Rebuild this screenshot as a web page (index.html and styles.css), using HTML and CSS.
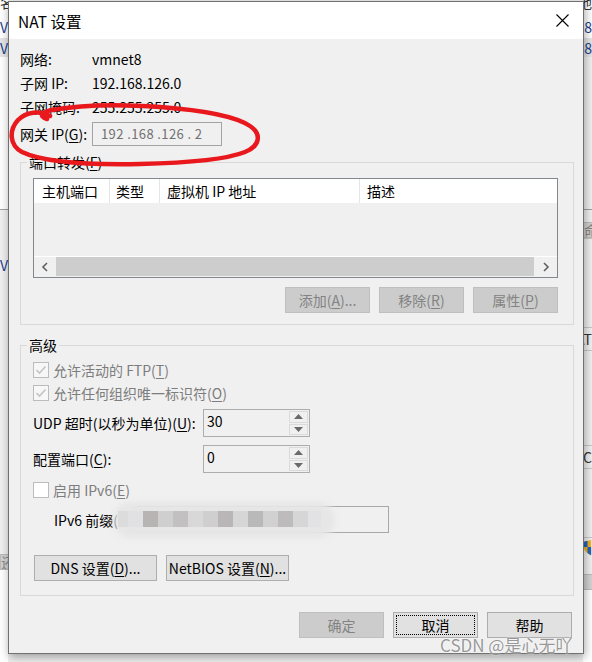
FILE: index.html
```html
<!DOCTYPE html>
<html lang="zh-CN">
<head>
    <meta charset="UTF-8">
    <title>NAT 设置</title>
    <link rel="stylesheet" href="styles.css">
</head>
<body>
    <!-- the windows behind the dialog -->
    <div class="desk">
        <div class="strip">
            <div class="band white h16"><span class="cut">名</span></div>
            <div class="band white h22 blue">V</div>
            <div class="band grey h19 blue">V</div>
            <div class="band white h152"></div>
            <div class="band line"></div>
            <div class="band h44"></div>
            <div class="band h22 blue">V</div>
            <div class="band h278"></div>
            <div class="band box h26">还</div>
            <div class="band white"></div>
        </div>
        <div class="strip right">
            <div class="band white h16"><span class="cut">地</span></div>
            <div class="band white h22 blue">68</div>
            <div class="band grey h19 blue">68</div>
            <div class="band h152"></div>
            <div class="band line"></div>
            <div class="band h12"></div>
            <div class="band box h24">命</div>
            <div class="band h90 lined"></div>
            <div class="band h22">AT</div>
            <div class="band h96 lined"></div>
            <div class="band h22">IC</div>
            <div class="band h70 lined"></div>
            <div class="band h20">
                <svg width="10" height="18" viewBox="0 0 10 18">
                    <path d="M1 2 L9 0 L9 17 C4 15 1 12 1 8 Z" fill="#f2b01e"/>
                    <path d="M1 2 L5 1 L5 8 L1 8 Z M5 8 L9 8 L9 17 C7 16 5 15 5 14 Z" fill="#1f64c2"/>
                </svg>
            </div>
            <div class="band h16"></div>
            <div class="band box h26"></div>
            <div class="band white"></div>
        </div>
    </div>

    <div class="dialog">
        <div class="titlebar">
            <span class="title">NAT 设置</span>
            <svg class="close" width="13" height="13" viewBox="0 0 13 13">
                <path d="M0.5 0.5 L12.5 12.5 M12.5 0.5 L0.5 12.5" stroke="#000" stroke-width="1.1"/>
            </svg>
        </div>

        <div class="content">
            <div class="info">
                <div class="row"><span class="lbl">网络:</span><span>vmnet8</span></div>
                <div class="row"><span class="lbl">子网 IP:</span><span>192.168.126.0</span></div>
                <div class="row"><span class="lbl">子网掩码:</span><span>255.255.255.0</span></div>
                <div class="row gw">
                    <span class="lbl">网关 IP(<u>G</u>):</span>
                    <div class="ipbox">192 .168 .126 . 2</div>
                </div>
            </div>

            <fieldset class="group pf">
                <legend>端口转发(<u>F</u>)</legend>
                <div class="list">
                    <div class="lhead">
                        <span class="c1">主机端口</span>
                        <span class="c2">类型</span>
                        <span class="c3">虚拟机 IP 地址</span>
                        <span class="c4">描述</span>
                    </div>
                    <div class="lbody"></div>
                    <div class="hscroll">
                        <div class="sbtn">
                            <svg width="8" height="10" viewBox="0 0 8 10"><path d="M6 1 L2 5 L6 9" fill="none" stroke="#606060" stroke-width="1.6"/></svg>
                        </div>
                        <div class="thumb"></div>
                        <div class="sbtn r">
                            <svg width="8" height="10" viewBox="0 0 8 10"><path d="M2 1 L6 5 L2 9" fill="none" stroke="#606060" stroke-width="1.6"/></svg>
                        </div>
                    </div>
                </div>
                <div class="btnrow">
                    <button class="btn off">添加(<u>A</u>)...</button>
                    <button class="btn off">移除(<u>R</u>)</button>
                    <button class="btn off">属性(<u>P</u>)</button>
                </div>
            </fieldset>

            <fieldset class="group adv">
                <legend>高级</legend>
                <div class="cb off">
                    <span class="box"><svg width="14" height="14" viewBox="0 0 14 14"><path d="M2.5 7 L5.5 10 L11.5 3.5" fill="none" stroke="#c4c4c4" stroke-width="1.6"/></svg></span>
                    <span>允许活动的 FTP(<u>T</u>)</span>
                </div>
                <div class="cb off">
                    <span class="box"><svg width="14" height="14" viewBox="0 0 14 14"><path d="M2.5 7 L5.5 10 L11.5 3.5" fill="none" stroke="#c4c4c4" stroke-width="1.6"/></svg></span>
                    <span>允许任何组织唯一标识符(<u>O</u>)</span>
                </div>
                <div class="field udp">
                    <span class="flbl">UDP 超时(以秒为单位)(<u>U</u>):</span>
                    <div class="spin">
                        <span class="val">30</span>
                        <div class="arrows">
                            <span class="arr"><svg width="9" height="5" viewBox="0 0 9 5"><path d="M4.5 0 L9 5 L0 5 Z" fill="#6a6a6a"/></svg></span>
                            <span class="arr"><svg width="9" height="5" viewBox="0 0 9 5"><path d="M0 0 L9 0 L4.5 5 Z" fill="#6a6a6a"/></svg></span>
                        </div>
                    </div>
                </div>
                <div class="field port">
                    <span class="flbl">配置端口(<u>C</u>):</span>
                    <div class="spin">
                        <span class="val">0</span>
                        <div class="arrows">
                            <span class="arr"><svg width="9" height="5" viewBox="0 0 9 5"><path d="M4.5 0 L9 5 L0 5 Z" fill="#6a6a6a"/></svg></span>
                            <span class="arr"><svg width="9" height="5" viewBox="0 0 9 5"><path d="M0 0 L9 0 L4.5 5 Z" fill="#6a6a6a"/></svg></span>
                        </div>
                    </div>
                </div>
                <div class="cb off v6">
                    <span class="box blank"></span>
                    <span>启用 IPv6(<u>E</u>)</span>
                </div>
                <div class="ipv6">
                    <span class="v6lbl">IPv6 前缀(</span>
                    <div class="v6box"></div>
                    <!-- blurred out by the screenshot author -->
                    <div class="halo"></div>
                    <div class="mosaic">
                        <i style="width:10px;background:#dcdcdc"></i>
                        <i style="background:#e1e1e3"></i>
                        <i style="background:#b8b4b4"></i>
                        <i style="background:#cfcfcf"></i>
                        <i style="background:#c2c0c0"></i>
                        <i style="background:#d8d8d8"></i>
                        <i style="background:#cfcfcf"></i>
                        <i style="background:#b9b6b7"></i>
                        <i style="background:#d6d6d6"></i>
                        <i style="background:#b9b9b9"></i>
                        <i style="background:#d1d1d1"></i>
                        <i style="background:#bdbbbb"></i>
                        <i style="background:#d6d6d6"></i>
                        <i style="width:13px;background:#e2e2e5"></i>
                    </div>
                </div>
                <div class="btnrow left">
                    <button class="btn wide">DNS 设置(<u>D</u>)...</button>
                    <button class="btn wide">NetBIOS 设置(<u>N</u>)...</button>
                </div>
            </fieldset>

            <div class="footer">
                <button class="btn off">确定</button>
                <button class="btn focus">取消</button>
                <button class="btn">帮助</button>
            </div>
        </div>
    </div>

    <svg class="scribble" width="592" height="662" viewBox="0 0 592 662">
        <path d="M50 116 C40 110 26 112 18 120 C9 130 9 145 22 152 C45 163 90 165 140 164 C185 163 225 160 245 152 C260 146 262 134 250 126 C235 116 200 110 160 107 C120 104 80 105 52 110 C42 112 38 116 47 119"
              fill="none" stroke="#e8181c" stroke-width="4.5" stroke-linecap="round" stroke-linejoin="round"/>
    </svg>

    <div class="mark">CSDN @是心无吖</div>
</body>
</html>
```

FILE: styles.css
```css
* {
    box-sizing: border-box;
}
body {
    margin: 0;
    width: 592px;
    height: 662px;
    overflow: hidden;
    position: relative;
    background: #f0f0f0;
    font-family: "Noto Sans CJK SC", "Noto Sans", sans-serif;
    font-size: 14px;
    color: #000;
}
u {
    text-decoration-thickness: 1px;
    text-underline-offset: 2px;
}

/* background windows */
.desk {
    display: flex;
    justify-content: space-between;
    height: 662px;
}
.strip {
    width: 8px;
    display: flex;
    flex-direction: column;
    overflow: hidden;
    font-size: 14px;
    line-height: 20px;
    color: #333;
    white-space: nowrap;
}
.strip.right {
    width: 9px;
    align-items: stretch;
}
.band {
    flex: none;
    display: flex;
    align-items: center;
    background: #f0f0f0;
    overflow: hidden;
}
.strip.right .band {
    justify-content: flex-end;
}
.band.white { background: #fff; flex: 1; }
.band.grey { background: #e5e5e5; }
.band.box { background: #d3d3d3; color: #888; }
.band.line { height: 1px; background: #a0a0a0; }
.band.lined { border-top: 1px solid #c8c8c8; border-bottom: 1px solid #c8c8c8; }
.band.blue { color: #1c3f8f; }
.cut { margin-top: -12px; }
.h12 { height: 12px; }
.h16 { height: 16px; flex: none !important; }
.h19 { height: 19px; }
.h20 { height: 20px; }
.h22 { height: 22px; flex: none !important; }
.h24 { height: 24px; }
.h26 { height: 26px; }
.h44 { height: 44px; }
.h70 { height: 70px; }
.h90 { height: 90px; }
.h96 { height: 96px; }
.h152 { height: 152px; flex: none !important; }
.h278 { height: 278px; }

/* dialog */
.dialog {
    position: absolute;
    left: 8px;
    top: 1px;
    width: 576px;
    height: 653px;
    border: 1px solid #707070;
    background: #f0f0f0;
    box-shadow: 1px 3px 9px rgba(0, 0, 0, 0.35);
}
.titlebar {
    height: 37px;
    background: #fff;
    display: flex;
    align-items: center;
    justify-content: space-between;
    padding: 0 14px 0 9px;
}
.title {
    font-size: 15.5px;
}
.content {
    padding: 8px 9px 0 11px;
}
.row {
    display: flex;
    align-items: center;
    height: 24px;
}
.lbl {
    width: 72px;
    flex: none;
}
.row.gw {
    margin-top: 3px;
    height: 24px;
}
.ipbox {
    width: 130px;
    height: 24px;
    border: 1px solid #a3a3a3;
    color: #707070;
    font-size: 13px;
    line-height: 22px;
    padding-left: 8px;
    letter-spacing: 0.4px;
}

/* group boxes */
.group {
    margin: 7px 0 0;
    border: 1px solid #d9d9d9;
    padding: 7px 15px 11px 12px;
    min-width: 0;
}
.group legend {
    padding: 0 2px;
    margin-left: -6px;
    line-height: 18px;
}
.list {
    height: 100px;
    border: 1px solid #828790;
    display: flex;
    flex-direction: column;
}
.lhead {
    display: flex;
    height: 24px;
    background: #fff;
    flex: none;
}
.lhead span {
    line-height: 24px;
    border-right: 1px solid #e5e5e5;
    white-space: nowrap;
}
.lhead .c1 { width: 76px; padding-left: 8px; }
.lhead .c2 { width: 50px; padding-left: 6px; }
.lhead .c3 { width: 200px; padding-left: 7px; }
.lhead .c4 { flex: 1; padding-left: 7px; border-right: none; }
.lbody {
    flex: 1;
}
.hscroll {
    height: 21px;
    flex: none;
    display: flex;
    border-top: 1px solid #fff;
}
.sbtn {
    width: 22px;
    display: flex;
    align-items: center;
    justify-content: center;
}
.sbtn.r {
    width: 23px;
}
.thumb {
    flex: 1;
    background: #cdcdcd;
    margin-bottom: 1px;
}

/* buttons */
.btnrow {
    display: flex;
    justify-content: flex-end;
    gap: 9px;
    margin-top: 9px;
}
.btn {
    width: 85px;
    height: 26px;
    padding: 0;
    border: 1px solid #adadad;
    background: #e1e1e1;
    font: inherit;
    color: #000;
}
.btn.off {
    background: #cccccc;
    border-color: #bfbfbf;
    color: #838383;
}
.btn.wide {
    width: 123px;
}
.btn.focus {
    outline: 1px dotted #000;
    outline-offset: -4px;
}

/* advanced */
.adv {
    margin-top: 11px;
    padding: 4px 15px 14px 12px;
}
.cb {
    display: flex;
    align-items: center;
    height: 23px;
    gap: 4px;
}
.cb.off {
    color: #7d7d7d;
}
.box {
    width: 16px;
    height: 16px;
    border: 1px solid #bcbcbc;
    background: #f7f7f7;
    display: flex;
    align-items: center;
    justify-content: center;
}
.box.blank {
    background: #fff;
}
.field {
    display: flex;
    align-items: center;
}
.field.udp { margin-top: 5px; }
.field.port { margin-top: 8px; }
.flbl {
    width: 170px;
    flex: none;
}
.spin {
    width: 107px;
    height: 28px;
    border: 1px solid #adadad;
    display: flex;
}
.spin .val {
    flex: 1;
    padding: 1px 0 0 3px;
    line-height: 20px;
}
.arrows {
    width: 20px;
    display: flex;
    flex-direction: column;
    padding: 1px 1px 1px 0;
    gap: 1px;
}
.arr {
    flex: 1;
    border: 1px solid #dadada;
    display: flex;
    align-items: center;
    justify-content: center;
}
.cb.v6 { margin-top: 5px; }
.ipv6 {
    position: relative;
    display: flex;
    align-items: center;
    margin-top: 5px;
    padding-left: 21px;
}
.v6lbl {
    width: 81px;
    flex: none;
}
.v6box {
    width: 254px;
    height: 27px;
    border: 1px solid #a8a8a8;
}
.halo {
    position: absolute;
    left: 80px;
    top: -4px;
    width: 222px;
    height: 36px;
    border-radius: 18px;
    background: #e6e6e6;
    filter: blur(3px);
}
.mosaic {
    position: absolute;
    left: 85px;
    top: 5px;
    height: 16px;
    display: flex;
}
.mosaic i {
    width: 15px;
    height: 16px;
}
.btnrow.left {
    justify-content: flex-start;
    margin: 22px 0 0 1px;
}
.footer {
    display: flex;
    justify-content: flex-end;
    gap: 9px;
    margin-top: 16px;
    padding-right: 2px;
}

/* overlays */
.scribble {
    position: absolute;
    left: 0;
    top: 0;
    pointer-events: none;
}
.mark {
    position: absolute;
    left: 440px;
    top: 632px;
    font-size: 17px;
    color: rgba(120, 120, 120, 0.75);
    text-shadow: 0 0 2px #fff;
    white-space: nowrap;
}
```
